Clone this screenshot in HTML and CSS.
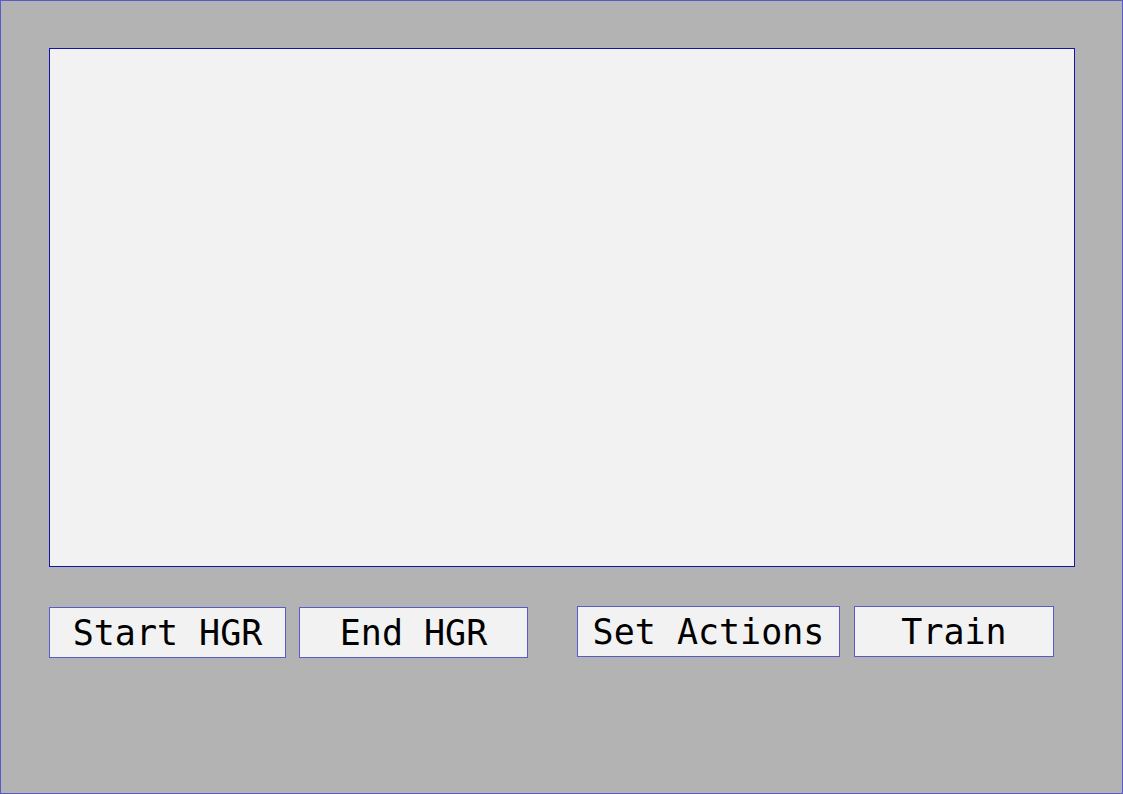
FILE: index.html
```html
<!DOCTYPE html>
<html>
<head>
<meta charset="utf-8">
<link rel="stylesheet" href="styles.css">
</head>
<body>
<div class="window">
  <div class="canvas"></div>
  <div class="controls">
    <div class="group">
      <div class="btn btn-start" role="button">Start HGR</div>
      <div class="btn btn-end" role="button">End HGR</div>
    </div>
    <div class="group group-right">
      <div class="btn btn-actions" role="button">Set Actions</div>
      <div class="btn btn-train" role="button">Train</div>
    </div>
  </div>
</div>
</body>
</html>
```

FILE: styles.css
```css
* { box-sizing: border-box; }
html, body { margin: 0; padding: 0; background: #b3b3b3; }
.window {
  width: 1123px;
  height: 794px;
  border: 1px solid #5a5acb;
  background: #b3b3b3;
  padding: 47px 0 0 48px;
}
.canvas {
  width: 1026px;
  height: 519px;
  background: #f2f2f2;
  border: 1px solid #1414a8;
}
.controls {
  display: flex;
  align-items: flex-start;
  margin-top: 40px;
  gap: 49px;
}
.group { display: flex; gap: 13px; }
.group-right { margin-top: -1px; gap: 14px; }
.btn {
  height: 51px;
  background: #f2f2f2;
  border: 1px solid #5a5acb;
  font-family: "DejaVu Sans Mono", "Liberation Mono", monospace;
  font-size: 35px;
  color: #000;
  line-height: 51px;
  text-align: center;
  white-space: nowrap;
}
.btn-start { width: 237px; }
.btn-end { width: 229px; }
.btn-actions { width: 263px; }
.btn-train { width: 200px; }
```
